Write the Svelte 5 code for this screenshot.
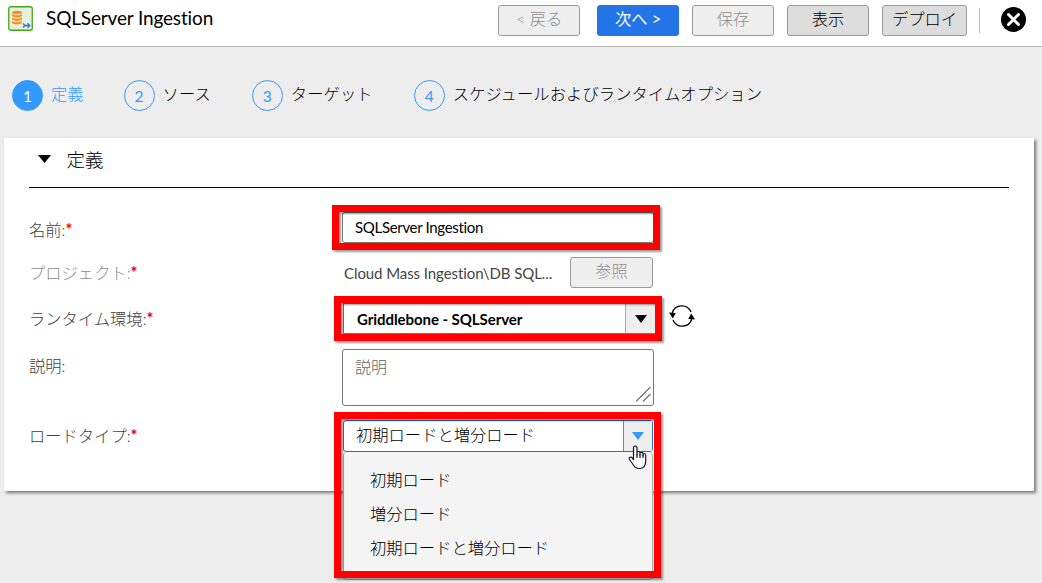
<script lang="ts">
    // Toolbar buttons
    const actions = [
        { label: '< 戻る', kind: 'disabled' },
        { label: '次へ >', kind: 'primary' },
        { label: '保存', kind: 'disabled' },
        { label: '表示', kind: 'normal' },
        { label: 'デプロイ', kind: 'normal wide' }
    ];

    // Wizard steps
    const steps = ['定義', 'ソース', 'ターゲット', 'スケジュールおよびランタイムオプション'];

    const loadTypes = ['初期ロード', '増分ロード', '初期ロードと増分ロード'];

    let currentStep = $state(0);
    let taskName = $state('SQLServer Ingestion');
    let loadType = $state('初期ロードと増分ロード');
    let menuOpen = $state(true);

    function selectLoadType(value: string) {
        loadType = value;
        menuOpen = false;
    }
</script>

<div class="page">
    <header class="header">
        <svg class="task-icon" width="25" height="25" viewBox="0 0 25 25">
            <rect x="0.75" y="0.75" width="23.5" height="23.5" rx="2" fill="#e5f3dc" stroke="#46a51c" stroke-width="1.3" />
            <g fill="#ff8a1c">
                <ellipse cx="9" cy="6.5" rx="5" ry="1.7" />
                <path d="M4 7.9q5 2.6 10 0v2q-5 3-10 0zM4 11.4q5 2.6 10 0v2q-5 3-10 0zM4 14.9q5 2.6 10 0v2q-5 3-10 0z" />
            </g>
            <path d="M15 17.5l2 2-2 2M16 19.5h5.5M19.4 17.3l2.3 2.2-2.3 2.2" fill="none" stroke="#2b78e4" stroke-width="1.5" />
        </svg>
        <h1>SQLServer Ingestion</h1>
        <div class="actions">
            {#each actions as action}
                <button class="button {action.kind}" disabled={action.kind === 'disabled'}>{action.label}</button>
            {/each}
        </div>
        <span class="divider"></span>
        <button class="close" aria-label="閉じる">
            <svg width="25" height="25" viewBox="0 0 25 25">
                <circle cx="12.5" cy="12.5" r="12.5" fill="#000" />
                <path d="M7.5 7.5l10 10M17.5 7.5l-10 10" stroke="#fff" stroke-width="3" stroke-linecap="round" />
            </svg>
        </button>
    </header>

    <nav class="steps">
        {#each steps as step, i}
            <button class="step" class:active={i === currentStep} onclick={() => (currentStep = i)}>
                <span class="number">{i + 1}</span>
                <span class="step-label">{step}</span>
            </button>
        {/each}
    </nav>

    <section class="panel">
        <div class="panel-header">
            <svg width="13" height="8" viewBox="0 0 13 8"><path d="M0 0h13L6.5 8z" /></svg>
            <h2>定義</h2>
        </div>

        <div class="row name">
            <label for="name">名前:<span class="required">*</span></label>
            <div class="field">
                <input id="name" type="text" bind:value={taskName} />
                <span class="highlight"></span>
            </div>
        </div>

        <div class="row project">
            <span class="label muted">プロジェクト:<span class="required">*</span></span>
            <div class="field">
                <span class="path">Cloud Mass Ingestion\DB SQL...</span>
                <button class="button disabled browse" disabled>参照</button>
            </div>
        </div>

        <div class="row runtime">
            <span class="label">ランタイム環境:<span class="required">*</span></span>
            <div class="field">
                <div class="select">
                    <span class="value">Griddlebone - SQLServer</span>
                    <span class="arrow">
                        <svg width="12" height="8" viewBox="0 0 12 8"><path d="M0 0h12L6 8z" /></svg>
                    </span>
                </div>
                <span class="highlight"></span>
            </div>
            <svg class="refresh" width="26" height="22" viewBox="0 0 26 22">
                <path d="M3.2 8A10 10 0 0 1 22 7M22.8 14A10 10 0 0 1 4 15" fill="none" stroke="#000" stroke-width="1.3" />
                <path d="M0 7.6l6.8.4-3 5.6zM26 14.4l-6.8-.4 3-5.6z" />
            </svg>
        </div>

        <div class="row description">
            <label for="description">説明:</label>
            <div class="field">
                <textarea id="description" placeholder="説明"></textarea>
                <svg class="grip" width="15" height="15" viewBox="0 0 15 15">
                    <path d="M0 14.5L14.5 0M7 14.5L14.5 7" stroke="#777" stroke-width="1.3" />
                </svg>
            </div>
        </div>

        <div class="row load">
            <span class="label">ロードタイプ:<span class="required">*</span></span>
            <div class="field">
                <button class="select open" onclick={() => (menuOpen = !menuOpen)}>
                    <span class="value">{loadType}</span>
                    <span class="arrow">
                        <svg width="12" height="8" viewBox="0 0 12 8"><path d="M0 0h12L6 8z" /></svg>
                    </span>
                </button>
                {#if menuOpen}
                    <div class="menu">
                        {#each loadTypes as type}
                            <button class="option" onclick={() => selectLoadType(type)}>{type}</button>
                        {/each}
                    </div>
                {/if}
                <span class="highlight"></span>
                <svg class="pointer" width="19" height="25" viewBox="0 0 19 25">
                    <path
                        d="M5.5 14.5V3.2Q5.5 1 7.2 1T9 3.2V9.5V8Q9 6.5 10.4 6.5T12 8V10V8.5Q12 7.3 13.4 7.3T15 8.8V10.5V9.5Q15 8.5 16.2 8.5T17.7 10V16Q17.7 23.5 11.5 23.5Q7.5 23.5 5.8 20.5L1.5 14.5Q.5 12.8 2 12.2Q3.2 11.7 4.2 13z"
                        fill="#fff" stroke="#14142b" stroke-width="1.2" stroke-linejoin="round"
                    />
                    <path d="M9 9v4M12 9.5v3.5M15 10v3" stroke="#14142b" stroke-width="1.2" />
                </svg>
            </div>
        </div>
    </section>
</div>

<style>
    :global(body) {
        background: #ededed;
        overflow: hidden;
    }

    .page {
        height: 583px;
        color: #000;
        font: 300 16.3px/24px Lato, 'Noto Sans CJK JP', sans-serif;
    }

    .page * {
        box-sizing: border-box;
    }

    svg {
        display: block;
        flex: none;
    }

    button {
        margin: 0;
        padding: 0;
        border: 0;
        background: none;
        color: inherit;
        font: inherit;
        text-align: left;
        white-space: nowrap;
    }

    .header {
        display: flex;
        align-items: flex-start;
        height: 47px;
        padding: 5px 16px 0 8px;
        background: #fff;
        border-bottom: 1px solid #b3b3b3;
    }

    .task-icon {
        margin-top: 1px;
    }

    h1 {
        flex: 1;
        margin: 1px 0 0 13px;
        font-size: 19px;
        font-weight: 400;
        line-height: 24px;
        letter-spacing: -0.15px;
    }

    .actions {
        display: flex;
        gap: 13px;
    }

    .button {
        width: 82px;
        height: 31px;
        padding-bottom: 3px;
        border: 1px solid #999;
        border-radius: 3px;
        background: #ddd;
        text-align: center;
        line-height: 24px;
    }

    .button.disabled {
        background: #eee;
        color: #8f8f8f;
    }

    .button.primary {
        margin-left: 4px;
        border-color: #2374e6;
        background: #2374e6;
        color: #fff;
        font-weight: 400;
    }

    .button.wide {
        width: 85px;
    }

    .divider {
        width: 1px;
        height: 25px;
        margin: 3px 21px 0 12px;
        background: #bbb;
    }

    .close {
        margin-top: 2px;
    }

    .steps {
        display: flex;
        height: 91px;
        padding: 33px 0 0 12px;
    }

    .step {
        display: flex;
        align-items: center;
        height: 31px;
        margin-right: 41px;
    }

    .step:first-child {
        margin-right: 40px;
    }

    .number {
        width: 31px;
        height: 31px;
        margin-right: 8px;
        border: 1px solid #3399ff;
        border-radius: 50%;
        color: #3399ff;
        font-size: 15.5px;
        font-weight: 400;
        line-height: 30px;
        text-align: center;
    }

    .active .number {
        background: #3399ff;
        color: #fff;
    }

    .step-label {
        margin-top: -3px;
        letter-spacing: 0.08px;
    }

    .active .step-label {
        color: #3399ff;
        letter-spacing: 0;
    }

    .panel {
        width: 1030px;
        height: 353px;
        margin-left: 4px;
        padding: 0 25px;
        background: #fff;
        box-shadow: 2px 2px 3px rgba(0, 0, 0, 0.5);
    }

    .panel-header {
        display: flex;
        align-items: flex-start;
        height: 50px;
        padding: 17px 0 0 9px;
        border-bottom: 1px solid #000;
    }

    h2 {
        margin: -7px 0 0 15.5px;
        font-size: 18.5px;
        font-weight: 300;
        line-height: 24px;
    }

    .row {
        display: flex;
    }

    .row label,
    .row .label {
        width: 313px;
        height: 24px;
        color: #404040;
    }

    .row .label.muted {
        color: #8c8c8c;
    }

    .required {
        color: #f00000;
        font-weight: 700;
    }

    .field {
        position: relative;
        display: flex;
        width: 312px;
    }

    .name {
        margin-top: 24px;
    }

    .name label {
        margin-top: 6px;
    }

    input,
    textarea {
        display: block;
        width: 312px;
        margin: 0;
        padding: 0 12px;
        border: 1px solid #777;
        border-radius: 3px;
        outline: none;
        background: #fff;
        color: #000;
        font: 400 15px/22px Lato, 'Noto Sans CJK JP', sans-serif;
    }

    input {
        height: 31px;
        padding-bottom: 1px;
        letter-spacing: -0.32px;
    }

    .highlight {
        position: absolute;
        inset: -7px -6px -7px -10px;
        border: 7px solid #f00;
        box-shadow: 2px 2px 2px rgba(0, 0, 0, 0.4), inset 2px 2px 2px rgba(0, 0, 0, 0.4);
        pointer-events: none;
    }

    .project {
        margin-top: 14px;
    }

    .project .label {
        margin-top: 4px;
    }

    .path {
        width: 228px;
        margin-top: 4px;
        padding-left: 2px;
        color: #444;
        font-size: 15px;
        font-weight: 400;
        letter-spacing: -0.08px;
        white-space: nowrap;
    }

    .browse {
        width: 83px;
    }

    .runtime {
        margin-top: 15px;
    }

    .runtime .label {
        margin-top: 4px;
    }

    .select {
        display: flex;
        width: 311px;
        height: 31px;
        margin-left: 1px;
        border: 1px solid #777;
        background: #fff;
    }

    .value {
        flex: 1;
        padding: 3px 0 0 12px;
    }

    .runtime .value {
        padding-left: 13px;
        font-size: 15px;
        font-weight: 700;
        letter-spacing: -0.06px;
    }

    .runtime .select {
        flex: none;
        width: 313px;
    }

    .arrow {
        display: flex;
        align-items: center;
        justify-content: center;
        width: 30px;
        border-left: 1px solid #aaa;
        background: #eee;
    }

    .runtime .highlight {
        inset: -7px -8px -7px -8px;
    }

    .refresh {
        margin: 2px 0 0 15px;
    }

    .description {
        margin-top: 15px;
    }

    .description label {
        margin-top: 5px;
    }

    textarea {
        height: 57px;
        padding-top: 6px;
        font-size: 16px;
        font-weight: 300;
        resize: none;
    }

    textarea::placeholder {
        color: #666;
    }

    .grip {
        position: absolute;
        right: 3px;
        bottom: 4px;
    }

    .load {
        margin-top: 14px;
    }

    .load .label {
        margin-top: 4px;
    }

    .select.open {
        width: 310px;
        height: 32px;
        border-color: #2b6fce;
        border-radius: 3px;
    }

    .open .value {
        padding-top: 2px;
    }

    .open .arrow {
        width: 29px;
        height: 30px;
        border-left-color: #3399ff;
        fill: #3399ff;
    }

    .menu {
        position: absolute;
        top: 32px;
        left: 1px;
        width: 310px;
        height: 128px;
        padding-top: 11px;
        border: 1px solid #aaa;
        border-top: 0;
        border-radius: 4px;
        background: #f4f4f4;
    }

    .option {
        display: block;
        width: 100%;
        height: 34px;
        padding-left: 26px;
    }

    .load .highlight {
        inset: -8px -7px auto -8px;
        height: 166px;
    }

    .pointer {
        position: absolute;
        top: 25px;
        left: 286px;
    }
</style>
